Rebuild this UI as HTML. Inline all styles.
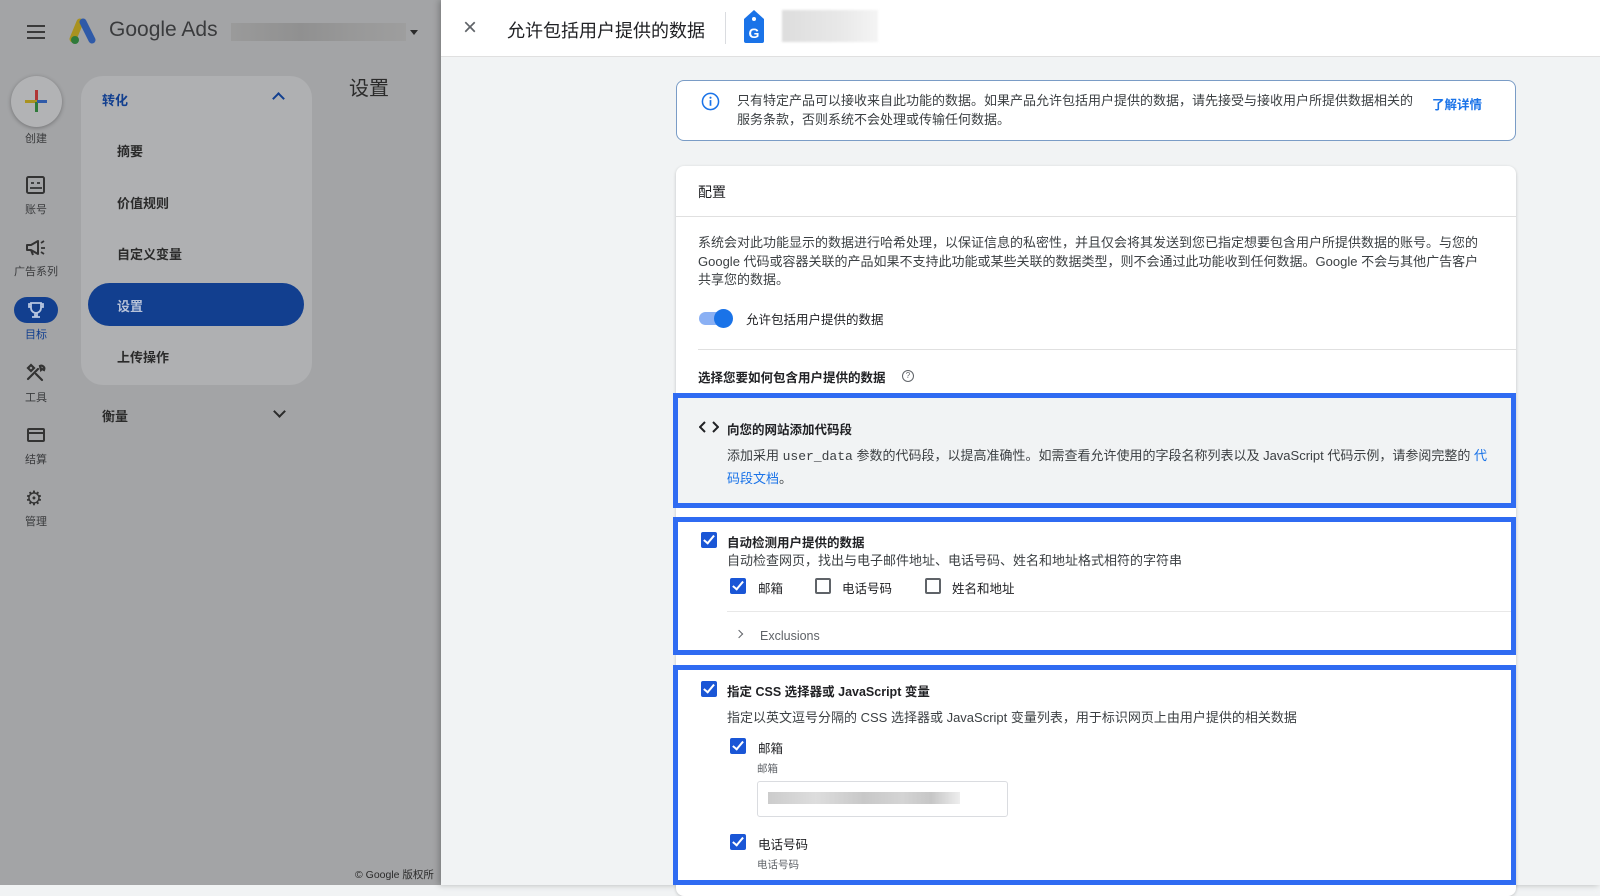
<!DOCTYPE html>
<html><head><meta charset="utf-8"><style>
*{margin:0;padding:0;box-sizing:border-box}
body{width:1600px;height:885px;overflow:hidden;position:relative;font-family:"Liberation Sans","Noto Sans CJK SC",sans-serif;color:#202124;background:#f1f3f4}
.a{position:absolute;white-space:nowrap}
#left{position:absolute;left:0;top:0;width:441px;height:885px;background:#a3a4a6;overflow:hidden}
#left .t{color:#2b2b2b}
.nl{position:absolute;width:72px;text-align:center;font-size:11px;color:#3a3b3d}
#right{position:absolute;left:441px;top:0;width:1159px;height:885px;background:#f1f3f4;box-shadow:-2px 0 6px rgba(0,0,0,.25)}
.hdr{position:absolute;left:0;top:0;width:1159px;height:57px;background:#fff;border-bottom:1px solid #e0e0e0}
.card{position:absolute;background:#fff;border-radius:8px;box-shadow:0 1px 3px rgba(0,0,0,.2)}
.p{font-size:13px;line-height:18.5px;color:#3c4043}
.bb{position:absolute;left:673px;width:843px;border:5px solid #2f6bf2}
.cb{position:absolute;width:16px;height:16px;border-radius:2px;background:#1a56d6}
.cb:after{content:"";position:absolute;left:5px;top:1px;width:4px;height:9px;border:solid #fff;border-width:0 2px 2px 0;transform:rotate(40deg)}
.cbo{position:absolute;width:16px;height:16px;border-radius:2px;border:2px solid #5f6368;background:#fff}
.lbl{font-size:12.5px;color:#202124}
</style></head><body>
<div id="left">
 <div class="a" style="left:27px;top:25px;width:18px;height:14px;border-top:2px solid #3a3a3a;border-bottom:2px solid #3a3a3a"><div style="margin-top:4px;border-top:2px solid #3a3a3a"></div></div>
 <svg class="a" style="left:69px;top:18px" width="30" height="28" viewBox="0 0 30 28"><path d="M11 4 L4 21" stroke="#a99220" stroke-width="7" stroke-linecap="round"/><path d="M14 4 L23 22" stroke="#2f5aa8" stroke-width="7" stroke-linecap="round"/><circle cx="6" cy="22" r="4" fill="#2f7a3a"/></svg>
 <div class="a" style="left:109px;top:18px;font-size:21px;color:#3a3b3d">Google Ads</div>
 <div class="a" style="left:231px;top:23px;width:175px;height:18px;background:linear-gradient(90deg,#999 0,#8e8e8e 40%,#979797 70%,#9d9d9d);opacity:.9"></div>
 <div class="a" style="left:410px;top:30px;border:4px solid transparent;border-top:5px solid #2b2b2b"></div>
 <div class="a" style="left:11px;top:76px;width:51px;height:51px;border-radius:50%;background:#b2b3b5;box-shadow:0 1px 4px rgba(0,0,0,.3)"></div>
 <div class="a" style="left:35px;top:90px;width:3px;height:22px;background:#b03535"></div>
 <div class="a" style="left:25px;top:100px;width:22px;height:3px;background:#a99220"></div>
 <div class="a" style="left:35px;top:102px;width:3px;height:10px;background:#2f7a3a"></div>
 <div class="a" style="left:37px;top:100px;width:10px;height:3px;background:#2f5aa8"></div>
 <div class="nl" style="left:0;top:130px">创建</div>
 <svg class="a" style="left:26px;top:176px" width="20" height="19" viewBox="0 0 20 19"><rect x="1" y="1" width="17" height="16" rx="1.5" fill="none" stroke="#333" stroke-width="2"/><path d="M5 7h3M11 7h3M4 12h12" stroke="#333" stroke-width="1.8"/></svg>
 <div class="nl" style="left:0;top:201px">账号</div>
 <svg class="a" style="left:25px;top:239px" width="22" height="18" viewBox="0 0 22 18"><path d="M2 6h4l7-4v13l-7-4H2z M6 11l2 5" fill="none" stroke="#333" stroke-width="2" stroke-linejoin="round"/><path d="M16 4l3-2M16 9h4M16 13l3 2" stroke="#333" stroke-width="1.8"/></svg>
 <div class="nl" style="left:0;top:263px">广告系列</div>
 <div class="a" style="left:14px;top:297px;width:44px;height:26px;border-radius:13px;background:#123f8f"></div>
 <svg class="a" style="left:26px;top:300px" width="20" height="20" viewBox="0 0 20 20"><path d="M5 3h10v5a5 5 0 0 1-10 0z M3 4h2v3H3z M15 4h2v3h-2z M9 13h2v3H9z M6 17h8" fill="none" stroke="#b7c6e0" stroke-width="1.8"/></svg>
 <div class="nl" style="left:0;top:326px;color:#123f8f">目标</div>
 <svg class="a" style="left:25px;top:362px" width="22" height="20" viewBox="0 0 22 20"><path d="M3 17L13 7M6 3l3 3-3 3-3-3z M11 12l6 6M15 4a3 3 0 0 1 4 4l-2-1-1 1z" fill="none" stroke="#333" stroke-width="2.2" stroke-linecap="round"/></svg>
 <div class="nl" style="left:0;top:389px">工具</div>
 <div class="a" style="left:27px;top:428px;width:18px;height:14px;border:2px solid #333;border-radius:2px"><div style="margin-top:2px;border-top:2px solid #333"></div></div>
 <div class="nl" style="left:0;top:451px">结算</div>
 <div class="a" style="left:25px;top:486px;font-size:20px;color:#333">⚙</div>
 <div class="nl" style="left:0;top:513px">管理</div>
 <div class="a" style="left:81px;top:76px;width:231px;height:309px;border-radius:22px;background:#afb0b2"></div>
 <div class="a" style="left:102px;top:90px;font-size:13px;color:#123f8f;font-weight:bold">转化</div>
 <div class="a" style="left:274px;top:94px;width:9px;height:9px;border-left:2px solid #123f8f;border-top:2px solid #123f8f;transform:rotate(45deg)"></div>
 <div class="a t" style="left:117px;top:141px;font-size:13px;font-weight:bold">摘要</div>
 <div class="a t" style="left:117px;top:193px;font-size:13px;font-weight:bold">价值规则</div>
 <div class="a t" style="left:117px;top:244px;font-size:13px;font-weight:bold">自定义变量</div>
 <div class="a" style="left:88px;top:283px;width:216px;height:43px;border-radius:22px;background:#123f8f"></div>
 <div class="a" style="left:117px;top:296px;font-size:13px;color:#b7c2d8;font-weight:bold">设置</div>
 <div class="a t" style="left:117px;top:347px;font-size:13px;font-weight:bold">上传操作</div>
 <div class="a t" style="left:102px;top:406px;font-size:13px;font-weight:bold">衡量</div>
 <div class="a" style="left:275px;top:407px;width:9px;height:9px;border-right:2px solid #2b2b2b;border-bottom:2px solid #2b2b2b;transform:rotate(45deg)"></div>
 <div class="a t" style="left:349px;top:72px;font-size:20px">设置</div>
 <div class="a t" style="left:355px;top:867px;font-size:10.5px">© Google 版权所</div>
</div>
<div id="right">
 <div class="hdr">
  <div class="a" style="left:22px;top:14px;font-size:24px;color:#5f6368;font-weight:300">×</div>
  <div class="a" style="left:66px;top:17px;font-size:18px;color:#202124">允许包括用户提供的数据</div>
  <div class="a" style="left:284px;top:12px;width:1px;height:32px;background:#dadce0"></div>
  <svg class="a" style="left:301px;top:9px" width="24" height="35" viewBox="0 0 24 35"><path d="M12 1 L22 10 V32 a2 2 0 0 1-2 2 H4 a2 2 0 0 1-2-2 V10 Z" fill="#1a73e8"/><circle cx="12" cy="10" r="2" fill="#fff"/><text x="12" y="29" font-size="14" font-weight="bold" fill="#fff" text-anchor="middle" font-family="Liberation Sans">G</text></svg>
  <div class="a" style="left:341px;top:10px;width:96px;height:32px;background:linear-gradient(90deg,#ddd,#e8e8e8 60%,#f4f4f4);filter:blur(1px)"></div>
 </div>
</div>
<div class="card" style="left:676px;top:80px;width:840px;height:61px;border:1.5px solid #7a9cc6;box-shadow:none"></div>
<svg class="a" style="left:701px;top:92px" width="19" height="19" viewBox="0 0 20 20"><circle cx="10" cy="10" r="8.5" fill="none" stroke="#1a73e8" stroke-width="1.6"/><rect x="9.1" y="8.5" width="1.8" height="6" fill="#1a73e8"/><circle cx="10" cy="6" r="1.1" fill="#1a73e8"/></svg>
<div class="a p" style="left:737px;top:92px">只有特定产品可以接收来自此功能的数据。如果产品允许包括用户提供的数据，请先接受与接收用户所提供数据相关的<br>服务条款，否则系统不会处理或传输任何数据。</div>
<div class="a" style="left:1432px;top:94px;font-size:12.5px;color:#1a73e8;font-weight:bold">了解详情</div>
<div class="card" style="left:676px;top:166px;width:840px;height:730px"></div>
<div class="a" style="left:698px;top:182px;font-size:14px">配置</div>
<div class="a" style="left:676px;top:216px;width:840px;height:1px;background:#e0e0e0"></div>
<div class="a p" style="left:698px;top:234px">系统会对此功能显示的数据进行哈希处理，以保证信息的私密性，并且仅会将其发送到您已指定想要包含用户所提供数据的账号。与您的<br>Google 代码或容器关联的产品如果不支持此功能或某些关联的数据类型，则不会通过此功能收到任何数据。Google 不会与其他广告客户<br>共享您的数据。</div>
<div class="a" style="left:699px;top:312px;width:30px;height:13px;border-radius:7px;background:#8ab0f4"></div>
<div class="a" style="left:714px;top:309px;width:19px;height:19px;border-radius:50%;background:#1a73e8"></div>
<div class="a lbl" style="left:746px;top:309px">允许包括用户提供的数据</div>
<div class="a" style="left:698px;top:349px;width:818px;height:1px;background:#e0e0e0"></div>
<div class="a" style="left:698px;top:367px;font-size:12.5px;font-weight:bold">选择您要如何包含用户提供的数据</div>
<div class="a" style="left:902px;top:370px;width:12px;height:12px;border:1px solid #5f6368;border-radius:50%;font-size:8px;text-align:center;line-height:10px;color:#5f6368">?</div>

<div class="bb" style="top:393px;height:115px;background:#f1f3f4"></div>
<svg class="a" style="left:699px;top:421px" width="20" height="12" viewBox="0 0 20 12"><path d="M6 1L1 6l5 5M14 1l5 5-5 5" fill="none" stroke="#202124" stroke-width="2"/></svg>
<div class="a" style="left:727px;top:419px;font-size:12.5px;font-weight:bold">向您的网站添加代码段</div>
<div class="a p" style="left:727px;top:445px;line-height:22px">添加采用 <span style="font-family:'Liberation Mono',monospace">user_data</span> 参数的代码段，以提高准确性。如需查看允许使用的字段名称列表以及 JavaScript 代码示例，请参阅完整的 <span style="color:#1a73e8">代</span><br><span style="color:#1a73e8">码段文档</span>。</div>

<div class="bb" style="top:517px;height:138px;background:#fff"></div>
<div class="cb" style="left:701px;top:532px"></div>
<div class="a" style="left:727px;top:532px;font-size:12.5px;font-weight:bold">自动检测用户提供的数据</div>
<div class="a p" style="left:727px;top:552px">自动检查网页，找出与电子邮件地址、电话号码、姓名和地址格式相符的字符串</div>
<div class="cb" style="left:730px;top:578px"></div><div class="a lbl" style="left:758px;top:578px">邮箱</div>
<div class="cbo" style="left:815px;top:578px"></div><div class="a lbl" style="left:842px;top:578px">电话号码</div>
<div class="cbo" style="left:925px;top:578px"></div><div class="a lbl" style="left:952px;top:578px">姓名和地址</div>
<div class="a" style="left:727px;top:611px;width:784px;height:1px;background:#e8e8e8"></div>
<div class="a" style="left:736px;top:631px;width:6px;height:6px;border-right:1.5px solid #5f6368;border-top:1.5px solid #5f6368;transform:rotate(45deg)"></div>
<div class="a" style="left:760px;top:629px;font-size:12.5px;color:#5f6368">Exclusions</div>

<div class="bb" style="top:665px;height:220px;background:#fff"></div>
<div class="cb" style="left:701px;top:681px"></div>
<div class="a" style="left:727px;top:681px;font-size:12.5px;font-weight:bold">指定 CSS 选择器或 JavaScript 变量</div>
<div class="a p" style="left:727px;top:709px">指定以英文逗号分隔的 CSS 选择器或 JavaScript 变量列表，用于标识网页上由用户提供的相关数据</div>
<div class="cb" style="left:730px;top:738px"></div><div class="a lbl" style="left:758px;top:738px">邮箱</div>
<div class="a" style="left:757px;top:761px;font-size:10.5px;color:#5f6368">邮箱</div>
<div class="a" style="left:757px;top:781px;width:251px;height:36px;border:1px solid #dadce0;border-radius:3px;background:#fff"></div>
<div class="a" style="left:768px;top:792px;width:192px;height:12px;background:linear-gradient(90deg,#ccc,#ddd 25%,#c8c8c8 50%,#d4d4d4 70%,#c6c6c6 85%,#eee)"></div>
<div class="cb" style="left:730px;top:834px"></div><div class="a lbl" style="left:758px;top:834px">电话号码</div>
<div class="a" style="left:757px;top:857px;font-size:10.5px;color:#5f6368">电话号码</div>
</body></html>
